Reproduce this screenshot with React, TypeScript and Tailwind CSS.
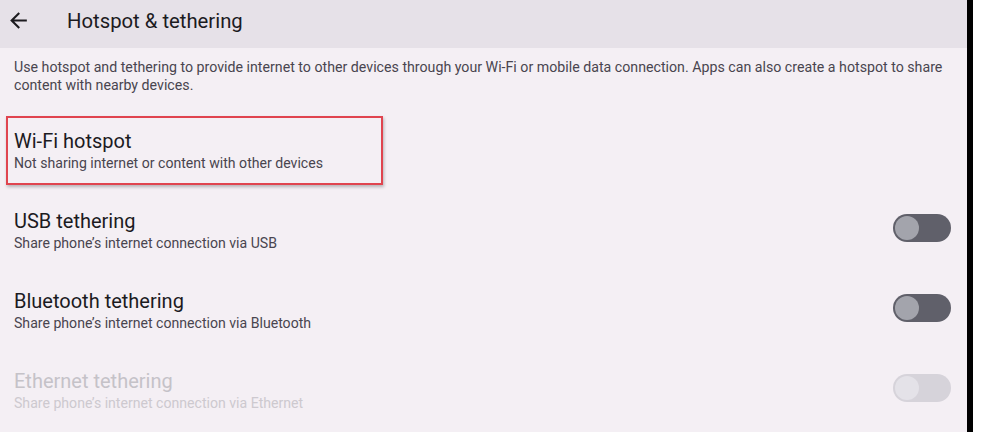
const rows = [
    { title: "USB tethering", sub: "Share phone\u2019s internet connection via USB", disabled: false },
    { title: "Bluetooth tethering", sub: "Share phone\u2019s internet connection via Bluetooth", disabled: false },
    { title: "Ethernet tethering", sub: "Share phone\u2019s internet connection via Ethernet", disabled: true },
];

// Off-state switch, greyed when disabled
const Toggle = ({ disabled }: { disabled: boolean }) => (
    <div
        className={`flex items-center w-[58px] h-[28px] rounded-full mb-[6px] ${
            disabled ? "bg-[#d6d3da]" : "bg-[#60606a]"
        }`}
    >
        <div
            className={`w-[24px] h-[24px] rounded-full ml-[2px] ${
                disabled ? "bg-[#e4e2e8]" : "bg-[#a3a4ac]"
            }`}
        />
    </div>
);

export default function App() {
    return (
        <div className="flex w-[1000px] h-[432px] overflow-hidden font-['Roboto',sans-serif]">
            <div className="flex flex-col w-[967px] h-full bg-[#f4eff4]">
                {/* app bar */}
                <div className="flex items-center h-12 bg-[#e6e1e8] pb-[6px]">
                    <svg viewBox="0 0 24 24" className="w-[25px] h-[25px] ml-[6px] mb-[2px] fill-[#1c1b1f]">
                        <path d="M20 11H7.83l5.59-5.59L12 4l-8 8 8 8 1.41-1.41L7.83 13H20v-2z" />
                    </svg>
                    <span className="ml-[36px] text-[20.3px] text-[#1c1b1f]">Hotspot &amp; tethering</span>
                </div>

                <p className="px-[14px] pt-[10px] pb-[17px] text-[14.2px] leading-[18px] text-[#49454f]">
                    Use hotspot and tethering to provide internet to other devices through your Wi-Fi or mobile data
                    connection. Apps can also create a hotspot to share content with nearby devices.
                </p>

                {/* Wi-Fi hotspot, highlighted */}
                <div className="relative flex flex-col justify-center h-20 px-[14px]">
                    <span className="text-[20px] leading-6 text-[#1c1b1f]">Wi-Fi hotspot</span>
                    <span className="text-[14.1px] leading-5 text-[#49454f]">
                        Not sharing internet or content with other devices
                    </span>
                    <div className="absolute left-[6px] top-[5px] w-[377px] h-[69px] border-2 border-[#e0444f] shadow-[1px_2px_3px_rgba(0,0,0,0.25)]" />
                </div>

                {rows.map((row) => (
                    <div key={row.title} className="flex items-center h-20 pl-[14px] pr-[16px]">
                        <div className="flex flex-col flex-1">
                            <span
                                className={`text-[20px] leading-6 ${row.disabled ? "text-[#c5c2c8]" : "text-[#1c1b1f]"}`}
                            >
                                {row.title}
                            </span>
                            <span
                                className={`text-[14.1px] leading-5 ${row.disabled ? "text-[#cdc9cf]" : "text-[#49454f]"}`}
                            >
                                {row.sub}
                            </span>
                        </div>
                        <Toggle disabled={row.disabled} />
                    </div>
                ))}
            </div>
            <div className="w-[6px] h-full bg-black" />
            <div className="flex-1 h-full bg-white" />
        </div>
    );
}
